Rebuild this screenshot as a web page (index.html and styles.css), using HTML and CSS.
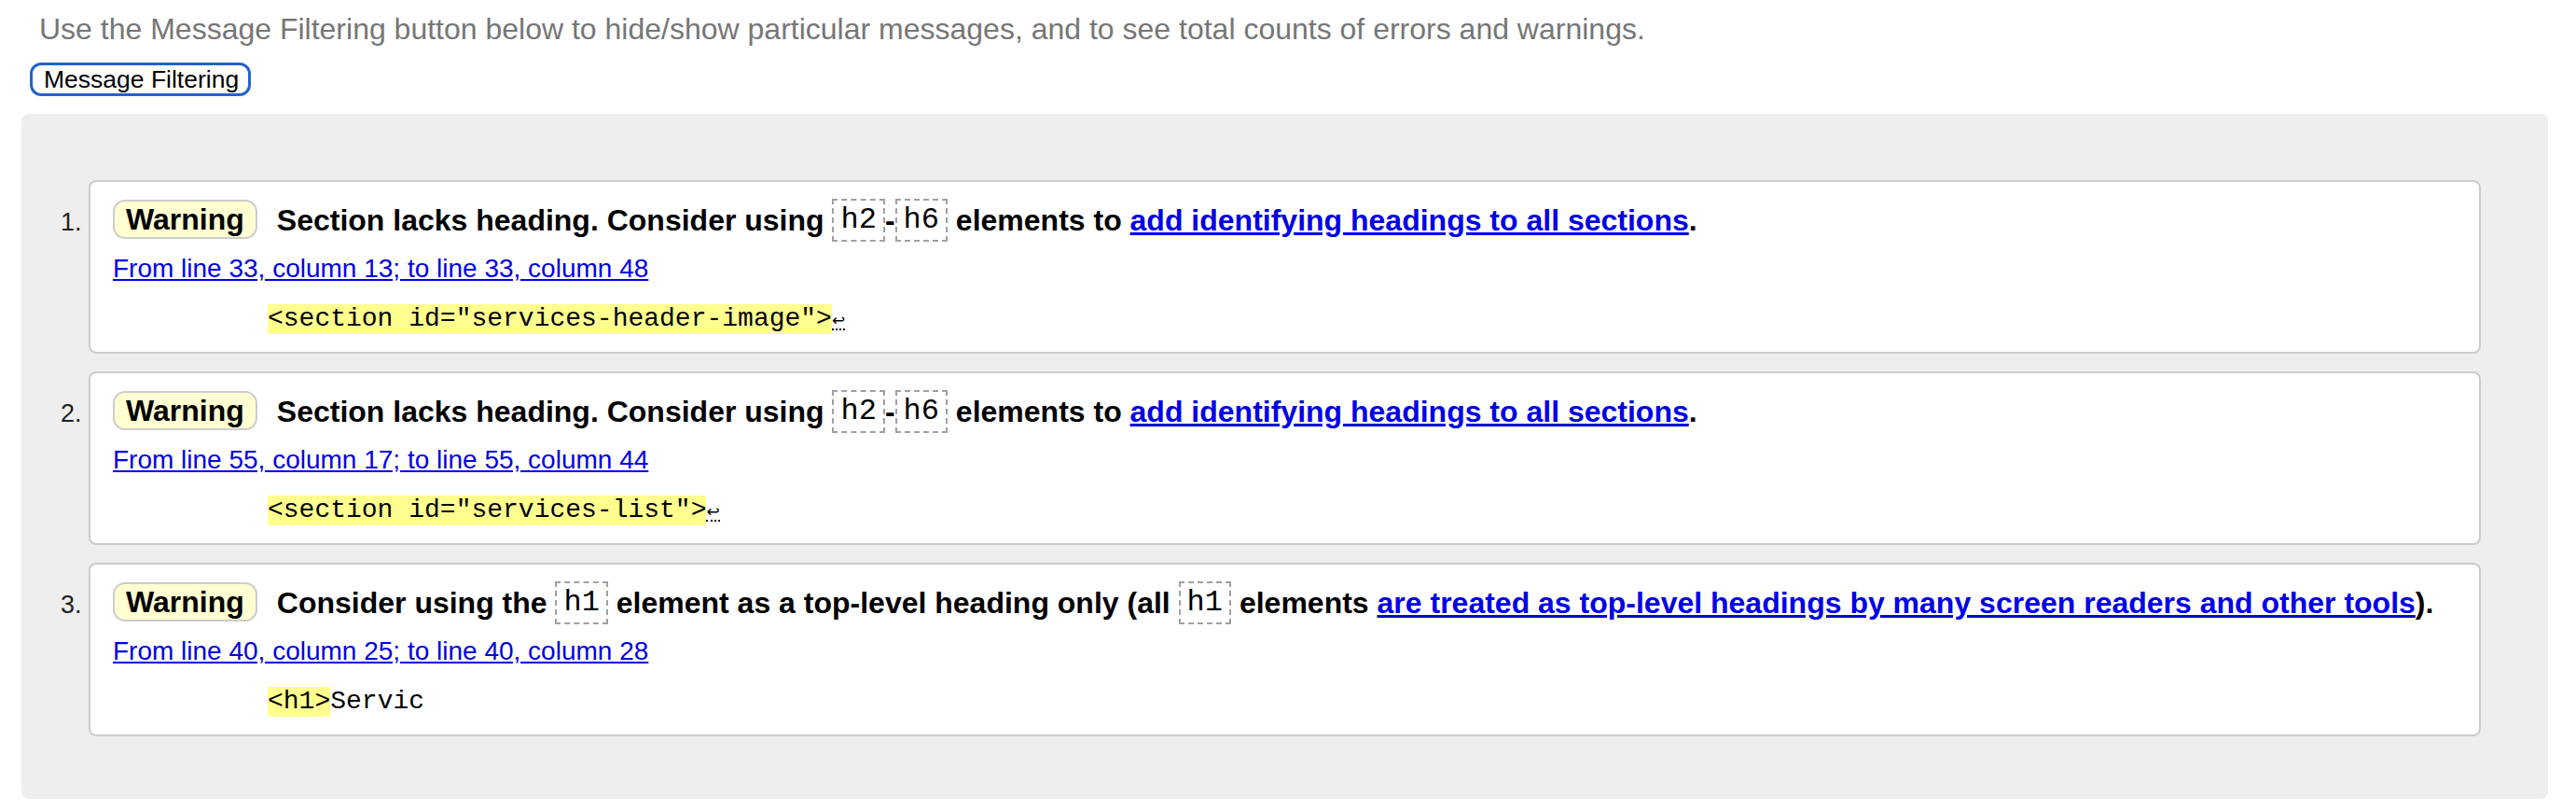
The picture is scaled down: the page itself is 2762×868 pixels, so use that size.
FILE: index.html
```html
<!DOCTYPE html>
<html lang="en">
<head>
<meta charset="utf-8">
<title>Message Filtering</title>
<link rel="stylesheet" href="styles.css">
</head>
<body>
<div class="page">
  <p class="intro">Use the Message Filtering button below to hide/show particular messages, and to see total counts of errors and warnings.</p>
  <button class="filter-btn" type="button">Message Filtering</button>
  <div class="results">
    <ol class="messages">
      <li class="item">
        <span class="num">1.</span>
        <div class="card">
          <p class="head"><strong class="badge">Warning</strong><span class="text">Section lacks heading. Consider using <code class="tag">h2</code>-<code class="tag">h6</code> elements to <a href="#">add identifying headings to all sections</a>.</span></p>
          <p class="loc"><a href="#">From line 33, column 13; to line 33, column 48</a></p>
          <p class="extract"><code><b class="hl">&lt;section id="services-header-image"&gt;</b><span class="lf">↩</span></code></p>
        </div>
      </li>
      <li class="item">
        <span class="num">2.</span>
        <div class="card">
          <p class="head"><strong class="badge">Warning</strong><span class="text">Section lacks heading. Consider using <code class="tag">h2</code>-<code class="tag">h6</code> elements to <a href="#">add identifying headings to all sections</a>.</span></p>
          <p class="loc"><a href="#">From line 55, column 17; to line 55, column 44</a></p>
          <p class="extract"><code><b class="hl">&lt;section id="services-list"&gt;</b><span class="lf">↩</span></code></p>
        </div>
      </li>
      <li class="item">
        <span class="num">3.</span>
        <div class="card">
          <p class="head"><strong class="badge">Warning</strong><span class="text">Consider using the <code class="tag">h1</code> element as a top-level heading only (all <code class="tag">h1</code> elements <a href="#">are treated as top-level headings by many screen readers and other tools</a>).</span></p>
          <p class="loc"><a href="#">From line 40, column 25; to line 40, column 28</a></p>
          <p class="extract"><code><b class="hl">&lt;h1&gt;</b>Servic</code></p>
        </div>
      </li>
    </ol>
  </div>
</div>
</body>
</html>
```

FILE: styles.css
```css
html, body {
  margin: 0;
  padding: 0;
  background: #ffffff;
}

body {
  font-family: "Liberation Sans", Arial, Helvetica, sans-serif;
  color: #000;
}

.page {
  padding: 0 30px 0 23px;
}

.intro {
  margin: 13px 0 0 19px;
  font-size: 32px;
  line-height: 36px;
  color: #767676;
}

.filter-btn {
  display: block;
  margin: 18px 0 0 9px;
  height: 36px;
  padding: 0 10px 0 12px;
  border: 3px solid #2462c6;
  border-radius: 12px;
  background: #ffffff;
  font-family: "Liberation Sans", Arial, sans-serif;
  font-size: 26.5px;
  line-height: 30px;
  color: #000;
}

.results {
  margin-top: 19px;
  background: #eeeeee;
  border-radius: 8px;
  padding: 71px 72px 67px 42px;
}

.messages {
  list-style: none;
  margin: 0;
  padding: 0;
  display: flex;
  flex-direction: column;
  gap: 19px;
}

.item {
  display: flex;
  align-items: baseline;
}

.num {
  flex: 0 0 30px;
  font-size: 27px;
  color: #222;
}

.card {
  flex: 1;
  background: #ffffff;
  border: 2px solid #cccccc;
  border-radius: 8px;
  padding: 18px 24px 21px 24px;
}

.head {
  margin: 0;
  height: 46px;
  font-size: 32px;
  line-height: 46px;
  font-weight: bold;
  white-space: nowrap;
}

.badge {
  display: inline-block;
  vertical-align: top;
  margin: 1px 21px 0 0;
  height: 42px;
  box-sizing: border-box;
  padding: 0 12px;
  border: 2px solid #cccccc;
  border-radius: 13px;
  background: #ffffd2;
  line-height: 38px;
}

.tag {
  display: inline-block;
  vertical-align: top;
  height: 46px;
  box-sizing: border-box;
  padding: 0 7px;
  border: 2px dashed #a0a0a0;
  font-family: "Liberation Mono", "Courier New", monospace;
  font-weight: normal;
  font-size: 32px;
  line-height: 42px;
}

a {
  color: #0000e6;
  text-decoration: underline;
}

.loc {
  margin: 13px 0 0 0;
  font-size: 28px;
  line-height: 32px;
}

.extract {
  margin: 20px 0 0 0;
  padding-left: 166px;
  height: 32px;
  font-size: 28px;
  line-height: 32px;
}

.extract code {
  font-family: "Liberation Mono", "Courier New", monospace;
  font-size: 28px;
}

.hl {
  display: inline-block;
  font-weight: normal;
  background: #ffff90;
  line-height: 32px;
}

.lf {
  display: inline-block;
  font-family: "DejaVu Sans", sans-serif;
  font-size: 17px;
  line-height: 18px;
  border-bottom: 2px dotted #000;
  vertical-align: baseline;
}
```
